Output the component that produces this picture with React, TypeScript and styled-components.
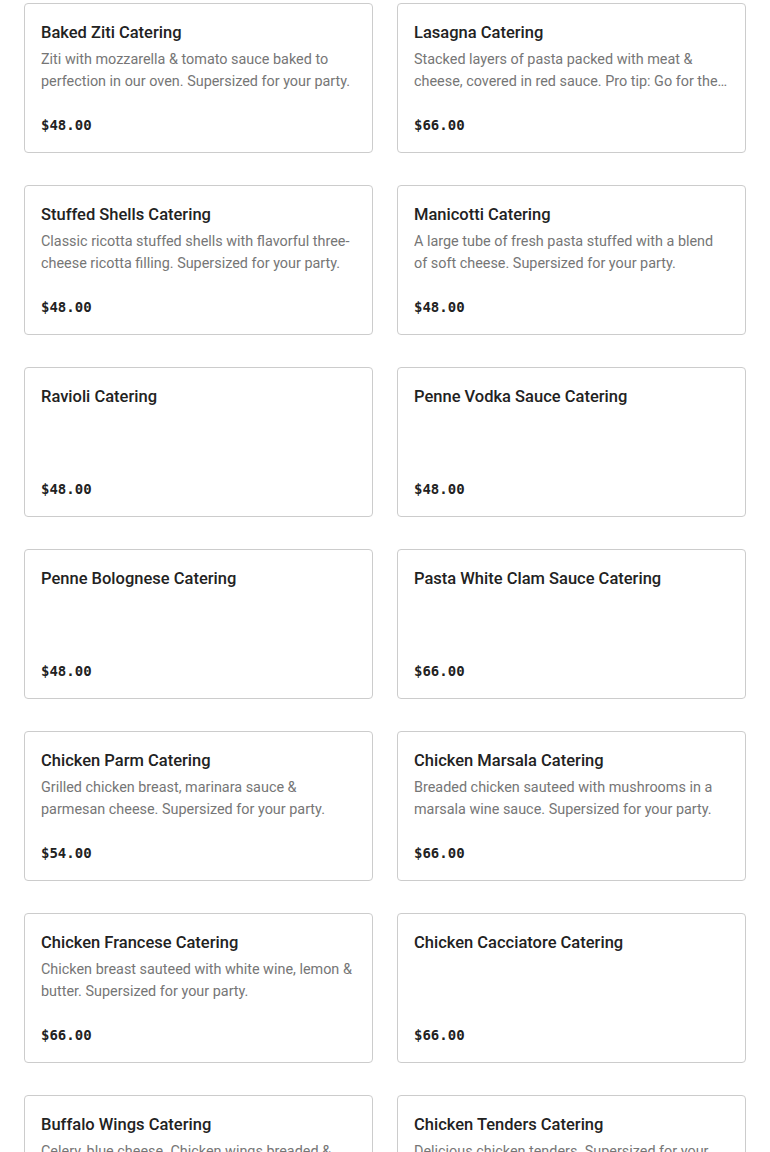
import styled, { createGlobalStyle } from "styled-components";

const GlobalStyle = createGlobalStyle`
  body {
    margin: 0;
    background: #ffffff;
    font-family: Roboto, "Noto Sans", sans-serif;
    color: #222222;
  }
`;

const Grid = styled.div`
  display: grid;
  grid-template-columns: repeat(2, 349px);
  column-gap: 24px;
  row-gap: 32px;
  padding: 3px 24px 0;
`;

const Card = styled.div`
  border: 1px solid #cccccc;
  border-radius: 4px;
  padding: 17px 16px;
  background: #ffffff;
`;

const Title = styled.h3`
  margin: 0;
  font-size: 16.5px;
  line-height: 24px;
  font-weight: 500;
  color: #222222;
`;

const Description = styled.p`
  margin: 4px 0 0;
  height: 44px;
  font-size: 14.4px;
  line-height: 22px;
  color: #767676;
  overflow: hidden;
  display: -webkit-box;
  -webkit-line-clamp: 2;
  -webkit-box-orient: vertical;
`;

const Price = styled.div`
  margin-top: 22px;
  font-family: "DejaVu Sans Mono", "Liberation Mono", monospace;
  font-size: 14px;
  font-weight: 700;
  line-height: 20px;
  color: #222222;
`;

interface IItem {
  name: string;
  description?: string;
  price: string;
}

const items: IItem[] = [
  {
    name: "Baked Ziti Catering",
    description:
      "Ziti with mozzarella & tomato sauce baked to perfection in our oven. Supersized for your party.",
    price: "$48.00",
  },
  {
    name: "Lasagna Catering",
    description:
      "Stacked layers of pasta packed with meat & cheese, covered in red sauce. Pro tip: Go for the meat sauce. Supersized for your party.",
    price: "$66.00",
  },
  {
    name: "Stuffed Shells Catering",
    description:
      "Classic ricotta stuffed shells with flavorful three-cheese ricotta filling. Supersized for your party.",
    price: "$48.00",
  },
  {
    name: "Manicotti Catering",
    description:
      "A large tube of fresh pasta stuffed with a blend of soft cheese. Supersized for your party.",
    price: "$48.00",
  },
  { name: "Ravioli Catering", price: "$48.00" },
  { name: "Penne Vodka Sauce Catering", price: "$48.00" },
  { name: "Penne Bolognese Catering", price: "$48.00" },
  { name: "Pasta White Clam Sauce Catering", price: "$66.00" },
  {
    name: "Chicken Parm Catering",
    description:
      "Grilled chicken breast, marinara sauce & parmesan cheese. Supersized for your party.",
    price: "$54.00",
  },
  {
    name: "Chicken Marsala Catering",
    description:
      "Breaded chicken sauteed with mushrooms in a marsala wine sauce. Supersized for your party.",
    price: "$66.00",
  },
  {
    name: "Chicken Francese Catering",
    description:
      "Chicken breast sauteed with white wine, lemon & butter. Supersized for your party.",
    price: "$66.00",
  },
  { name: "Chicken Cacciatore Catering", price: "$66.00" },
  {
    name: "Buffalo Wings Catering",
    description:
      "Celery, blue cheese. Chicken wings breaded & fried, tossed in buffalo sauce. Supersized for your party.",
    price: "$54.00",
  },
  {
    name: "Chicken Tenders Catering",
    description: "Delicious chicken tenders. Supersized for your party.",
    price: "$54.00",
  },
];

function App() {
  return (
    <>
      <GlobalStyle />
      <Grid>
        {items.map((item) => (
          <Card key={item.name}>
            <Title>{item.name}</Title>
            <Description>{item.description ?? ""}</Description>
            <Price>{item.price}</Price>
          </Card>
        ))}
      </Grid>
    </>
  );
}

export default App;
